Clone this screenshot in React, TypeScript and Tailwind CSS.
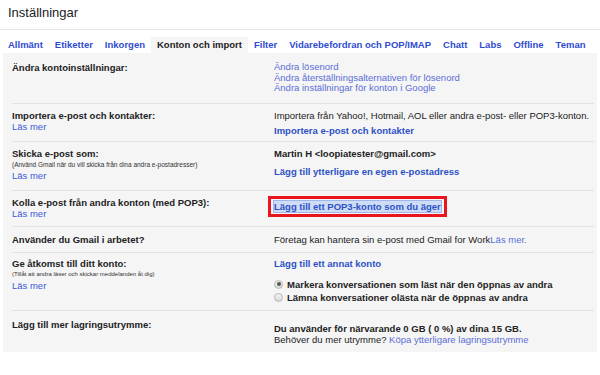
import React from "react";

const tabs = [
  "Allmänt",
  "Etiketter",
  "Inkorgen",
  "Konton och import",
  "Filter",
  "Vidarebefordran och POP/IMAP",
  "Chatt",
  "Labs",
  "Offline",
  "Teman",
];

function Radio({ checked }: { checked?: boolean }) {
  return (
    <span className="w-[9px] h-[9px] rounded-full border border-[#b8b8b8] bg-gradient-to-b from-[#f4f4f4] to-[#d8d8d8] flex items-center justify-center shrink-0">
      {checked && <span className="w-[4px] h-[4px] rounded-full bg-[#555]" />}
    </span>
  );
}

function Row({
  left,
  right,
  className,
}: {
  left: React.ReactNode;
  right: React.ReactNode;
  className?: string;
}) {
  return (
    <div className={"flex border-b border-[#e2e2e2] " + (className ?? "")}>
      <div className="w-[262px] shrink-0">{left}</div>
      <div className="flex-1">{right}</div>
    </div>
  );
}

const lasMer = <div className="text-[#3d5bd6] text-[9.5px] leading-[11px]">Läs mer</div>;

export default function App() {
  return (
    <div
      className="w-[600px] h-[375px] bg-white text-[#222] overflow-hidden"
      style={{ fontFamily: '"Liberation Sans", Arial, sans-serif' }}
    >
      <div className="pl-[8px] pt-[4px] h-[30px] text-[13px] leading-[18px] text-[#222] border-b border-[#e5e5e5]">
        Inställningar
      </div>
      <div className="flex items-end h-[23px] pl-[2px] text-[9.5px] font-bold leading-[11px]">
        {tabs.map((t) => {
          const active = t === "Konton och import";
          return (
            <div
              key={t}
              className={
                "px-[6px] h-[16px] pt-[2px] whitespace-nowrap " +
                (active ? "bg-[#f5f5f5] text-[#222]" : "text-[#2f4cd0]")
              }
            >
              {t}
            </div>
          );
        })}
      </div>
      <div className="mx-[3px] bg-[#f5f5f5] pl-[9px] pr-[3px] pt-[3px] pb-[7px] text-[9.5px] leading-[11px]">
        <Row
          className="pt-[6px] pb-[9px]"
          left={<div className="font-bold">Ändra kontoinställningar:</div>}
          right={
            <div className="text-[#5b6ed8] leading-[10.5px]">
              <div>Ändra lösenord</div>
              <div>Ändra återställningsalternativen för lösenord</div>
              <div>Ändra inställningar för konton i Google</div>
            </div>
          }
        />
        <Row
          className="pt-[6px] pb-[5px]"
          left={
            <div>
              <div className="font-bold">Importera e-post och kontakter:</div>
              {lasMer}
            </div>
          }
          right={
            <div>
              <div>Importera från Yahoo!, Hotmail, AOL eller andra e-post- eller POP3-konton.</div>
              <div className="mt-[4px] font-bold text-[#2d52c6]">Importera e-post och kontakter</div>
            </div>
          }
        />
        <Row
          className="pt-[6px] pb-[9px]"
          left={
            <div>
              <div className="font-bold">Skicka e-post som:</div>
              <div className="text-[6.5px] leading-[11px] text-[#333]">
                (Använd Gmail när du vill skicka från dina andra e-postadresser)
              </div>
              {lasMer}
            </div>
          }
          right={
            <div>
              <div className="font-bold">Martin H &lt;loopiatester@gmail.com&gt;</div>
              <div className="mt-[7px] font-bold text-[#2d52c6]">
                Lägg till ytterligare en egen e-postadress
              </div>
            </div>
          }
        />
        <Row
          className="pt-[6px] pb-[7px]"
          left={
            <div>
              <div className="font-bold">Kolla e-post från andra konton (med POP3):</div>
              {lasMer}
            </div>
          }
          right={
            <div className="-ml-[6px] -mt-[1px] w-fit border-[3px] border-[#e8141e] px-[3px] py-[2px] whitespace-nowrap">
              <span className="font-bold text-[#2d52c6] bg-[#cfdcf6] outline outline-1 outline-[#9fb6ea]">
                Lägg till ett POP3-konto som du äger
              </span>
            </div>
          }
        />
        <Row
          className="pt-[7px] pb-[7px]"
          left={<div className="font-bold">Använder du Gmail i arbetet?</div>}
          right={
            <div>
              Företag kan hantera sin e-post med Gmail for Work
              <span className="text-[#5b6ed8]">Läs mer.</span>
            </div>
          }
        />
        <Row
          className="pt-[5px] pb-[7px]"
          left={
            <div>
              <div className="font-bold">Ge åtkomst till ditt konto:</div>
              <div className="text-[6px] leading-[11px] text-[#333]">
                (Tillåt att andra läser och skickar meddelanden åt dig)
              </div>
              {lasMer}
            </div>
          }
          right={
            <div>
              <div className="font-bold text-[#2d52c6]">Lägg till ett annat konto</div>
              <div className="mt-[10px] flex items-center gap-[4px] font-bold">
                <Radio checked />
                <span>Markera konversationen som läst när den öppnas av andra</span>
              </div>
              <div className="mt-[2px] flex items-center gap-[4px] font-bold">
                <Radio />
                <span>Lämna konversationer olästa när de öppnas av andra</span>
              </div>
            </div>
          }
        />
        <div className="flex pt-[8px]">
          <div className="w-[262px] shrink-0 font-bold">Lägg till mer lagringsutrymme:</div>
          <div className="flex-1 pt-[4px]">
            <div className="font-bold">Du använder för närvarande 0 GB ( 0 %) av dina 15 GB.</div>
            <div>
              Behöver du mer utrymme?{" "}
              <span className="text-[#5b6ed8]">Köpa ytterligare lagringsutrymme</span>
            </div>
          </div>
        </div>
      </div>
    </div>
  );
}
